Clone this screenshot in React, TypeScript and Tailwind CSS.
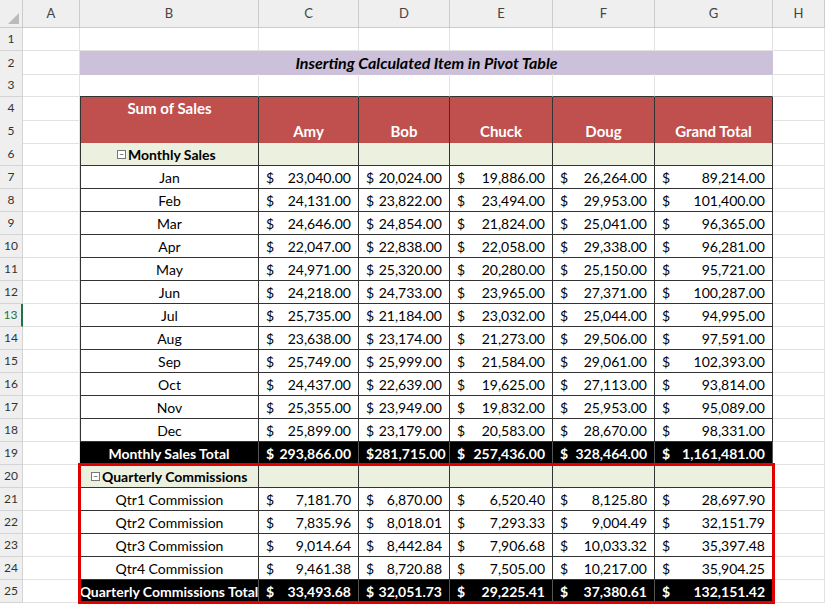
const cols = ['A', 'B', 'C', 'D', 'E', 'F', 'G', 'H']
const grid = 'grid grid-cols-[23px_57px_179px_100px_91px_103px_102px_118px_52px]'

const monthly: [string, string[]][] = [
  ['Jan', ['23,040.00', '20,024.00', '19,886.00', '26,264.00', '89,214.00']],
  ['Feb', ['24,131.00', '23,822.00', '23,494.00', '29,953.00', '101,400.00']],
  ['Mar', ['24,646.00', '24,854.00', '21,824.00', '25,041.00', '96,365.00']],
  ['Apr', ['22,047.00', '22,838.00', '22,058.00', '29,338.00', '96,281.00']],
  ['May', ['24,971.00', '25,320.00', '20,280.00', '25,150.00', '95,721.00']],
  ['Jun', ['24,218.00', '24,733.00', '23,965.00', '27,371.00', '100,287.00']],
  ['Jul', ['25,735.00', '21,184.00', '23,032.00', '25,044.00', '94,995.00']],
  ['Aug', ['23,638.00', '23,174.00', '21,273.00', '29,506.00', '97,591.00']],
  ['Sep', ['25,749.00', '25,999.00', '21,584.00', '29,061.00', '102,393.00']],
  ['Oct', ['24,437.00', '22,639.00', '19,625.00', '27,113.00', '93,814.00']],
  ['Nov', ['25,355.00', '23,949.00', '19,832.00', '25,953.00', '95,089.00']],
  ['Dec', ['25,899.00', '23,179.00', '20,583.00', '28,670.00', '98,331.00']],
]
const qtr: [string, string[]][] = [
  ['Qtr1 Commission', ['7,181.70', '6,870.00', '6,520.40', '8,125.80', '28,697.90']],
  ['Qtr2 Commission', ['7,835.96', '8,018.01', '7,293.33', '9,004.49', '32,151.79']],
  ['Qtr3 Commission', ['9,014.64', '8,442.84', '7,906.68', '10,033.32', '35,397.48']],
  ['Qtr4 Commission', ['9,461.38', '8,720.88', '7,505.00', '10,217.00', '35,904.25']],
]

function RowNum({ n }: { n: number }) {
  return (
    <div className={`flex items-center justify-center border-r border-b border-[#d4d4d4] bg-[#efefef] text-[12px] ${n === 13 ? 'text-[#217346] border-r-2 border-r-[#217346]' : 'text-[#333]'}`}>
      {n}
    </div>
  )
}

const empty = 'border-r border-b border-[#e2e2e2]'

function Money({ v, bold, dark }: { v: string; bold?: boolean; dark?: boolean }) {
  return (
    <div className={`flex items-center justify-between px-[7px] border-r border-b ${dark ? 'bg-black text-white border-[#555] font-bold' : 'border-[#333]'} ${bold ? 'font-bold' : ''}`}>
      <span>$</span>
      <span>{v}</span>
    </div>
  )
}

function DataRow({ n, label, vals }: { n: number; label: string; vals: string[] }) {
  return (
    <div className={`${grid} h-[23px]`}>
      <RowNum n={n} />
      <div className={empty} />
      <div className="flex items-center justify-center border-x border-b border-[#333]">{label}</div>
      {vals.map((v, i) => <Money key={i} v={v} />)}
      <div className={empty} />
    </div>
  )
}

function TotalRow({ n, label, vals }: { n: number; label: string; vals: string[] }) {
  return (
    <div className={`${grid} h-[23px]`}>
      <RowNum n={n} />
      <div className={empty} />
      <div className="flex items-center justify-center bg-black text-white font-bold whitespace-nowrap border-r border-[#555]">{label}</div>
      {vals.map((v, i) => <Money key={i} v={v} dark />)}
      <div className={empty} />
    </div>
  )
}

function GroupRow({ n, label, indent }: { n: number; label: string; indent: string }) {
  return (
    <div className={`${grid} h-[23px]`}>
      <RowNum n={n} />
      <div className={empty} />
      <div className={`flex items-center ${indent} bg-[#ebf1de] border-x border-b border-[#333] font-bold`}>
        <span className="mr-[2px] inline-flex h-[9px] w-[9px] items-center justify-center border border-[#777] bg-white text-[8px] leading-none text-[#555]">−</span>
        {label}
      </div>
      {[0, 1, 2, 3, 4].map(i => <div key={i} className="bg-[#ebf1de] border-r border-b border-[#333]" />)}
      <div className={empty} />
    </div>
  )
}

export default function App() {
  return (
    <div className="w-[825px] h-[612px] overflow-hidden bg-white text-[14px] text-black" style={{ fontFamily: 'Lato, "Noto Sans", sans-serif' }}>
      <div className={`${grid} h-[28px] bg-[#efefef] text-[13px] text-[#444]`}>
        <div className="border-r border-b border-[#ccc] flex items-end justify-end p-[3px]">
          <div className="w-0 h-0 border-l-[11px] border-l-transparent border-b-[11px] border-b-[#bbb]" />
        </div>
        {cols.map(c => (
          <div key={c} className="flex items-center justify-center border-r border-b border-[#ccc]">{c}</div>
        ))}
      </div>

      {[1, 3].map(n => null)}
      <div className={`${grid} h-[23px]`}>
        <RowNum n={1} />
        {cols.map(c => <div key={c} className={empty} />)}
      </div>
      <div className={`${grid} h-[23px]`}>
        <RowNum n={2} />
        <div className={empty} />
        <div className="col-span-6 flex items-center justify-center bg-[#ccc0da] text-[16px] font-bold italic">
          Inserting Calculated Item in Pivot Table
        </div>
        <div className={empty} />
      </div>
      <div className={`${grid} h-[23px]`}>
        <RowNum n={3} />
        {cols.map(c => <div key={c} className={`${empty} ${c === 'B' || c === 'C' || c === 'D' || c === 'E' || c === 'F' || c === 'G' ? 'border-b-[#333]' : ''}`} />)}
      </div>

      <div className={`${grid} h-[23px]`}>
        <RowNum n={4} />
        <div className={empty} />
        <div className="flex items-center justify-center bg-[#c0504d] text-white font-bold text-[15px] border-x border-b border-[#333]">Sum of Sales</div>
        {[0, 1, 2, 3, 4].map(i => <div key={i} className="bg-[#c0504d] border-r border-b border-[#333]" />)}
        <div className={empty} />
      </div>
      <div className={`${grid} h-[23px]`}>
        <RowNum n={5} />
        <div className={empty} />
        <div className="bg-[#c0504d] border-x border-b border-[#333]" />
        {['Amy', 'Bob', 'Chuck', 'Doug', 'Grand Total'].map(h => (
          <div key={h} className="flex items-center justify-center bg-[#c0504d] text-white font-bold text-[15px] border-r border-b border-[#333]">{h}</div>
        ))}
        <div className={empty} />
      </div>

      <GroupRow n={6} label="Monthly Sales" indent="pl-[36px]" />
      {monthly.map(([m, v], i) => <DataRow key={m} n={7 + i} label={m} vals={v} />)}
      <TotalRow n={19} label="Monthly Sales Total" vals={['293,866.00', '281,715.00', '257,436.00', '328,464.00', '1,161,481.00']} />

      <div className="relative">
        <GroupRow n={20} label="Quarterly Commissions" indent="pl-[10px]" />
        {qtr.map(([m, v], i) => <DataRow key={m} n={21 + i} label={m} vals={v} />)}
        <TotalRow n={25} label="Quarterly Commissions Total" vals={['33,493.68', '32,051.73', '29,225.41', '37,380.61', '132,151.42']} />
        <div className="pointer-events-none absolute left-[78px] top-[-2px] w-[697px] h-[141px] border-[3px] border-[#e00000]" />
      </div>
    </div>
  )
}
